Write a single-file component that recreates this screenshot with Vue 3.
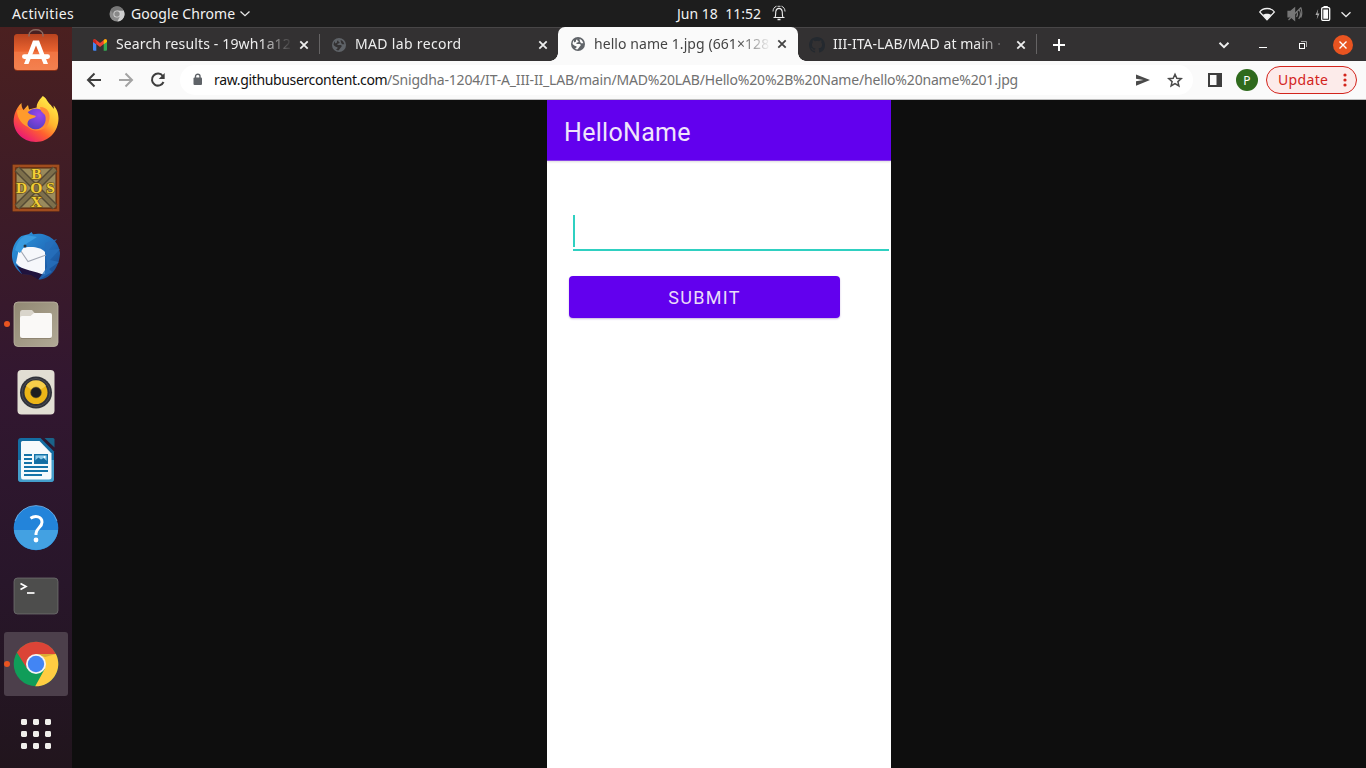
<script setup>
const tabs = [
  { icon: 'gmail', title: 'Search results - 19wh1a12', cls: 'first', fit: 't1' },
  { icon: 'globe', title: 'MAD lab record', cls: 'second', fit: 't2' },
  { icon: 'globe', title: 'hello name 1.jpg (661×128', cls: 'active', fit: 't3' },
  { icon: 'github', title: 'III-ITA-LAB/MAD at main ·', cls: 'last', fit: 't4' },
]
const dots = [0, 12, 24]
</script>

<template>
  <div class="desktop">
    <header class="topbar">
      <span class="activities">Activities</span>
      <svg class="app-ico" width="16" height="16" viewBox="0 0 16 16">
        <circle cx="8" cy="8" r="7.5" fill="#8b8b8b" />
        <path d="M8 4.5h6.7A7.5 7.5 0 0 1 8.4 15.5L11.2 10z" fill="#cfcfcf" />
        <path d="M1.5 4A7.5 7.5 0 0 1 14.7 4.5H8L4.8 9z" fill="#777" />
        <circle cx="8" cy="8" r="3.6" fill="#d8d8d8" />
        <circle cx="8" cy="8" r="2.7" fill="#898989" />
      </svg>
      <span class="app-name">Google Chrome</span>
      <svg class="app-chev" width="12" height="8" viewBox="0 0 12 8"><path d="M1.5 1.5L6 5.7L10.5 1.5" fill="none" stroke="#e8e8e8" stroke-width="1.3" /></svg>
      <span class="clock">Jun 18&nbsp; 11:52</span>
      <svg class="bell" width="14" height="16" viewBox="0 0 14 16" fill="none" stroke="#eee" stroke-width="1.1">
        <path d="M1.500 12.500h11M3 12.500C4 10 3.500 8.500 3.800 6.500C4.300 2.300 9.700 2.300 10.200 6.500C10.500 8.500 10 10 11 12.500" />
        <path d="M1 6.500C1 4 2.300 2 4.500 1.200M13 6.500C13 4 11.700 2 9.500 1.200M5.500 1.300h3" stroke-width=".9" />
        <path d="M5.500 14.500h3" stroke-width="1.500" />
      </svg>
      <svg class="status" width="106" height="20" viewBox="1256 3 106 20">
        <path d="M1259.7 11C1262.8 6.3 1271.4 6.3 1274.4 11L1267 18.8z" fill="none" stroke="#f0f0f0" stroke-width="1.3" />
        <path d="M1262.8 13.8C1265 12.3 1269 12.3 1271.2 13.8L1267 18.8z" fill="#f0f0f0" />
        <g fill="none" stroke="#777" stroke-width="1.2"><path d="M1288 10.3h2.8l3.8-3.2v12l-3.8-3.3H1288z" fill="#777" /><path d="M1296.5 10q2 3 0 6M1298.7 8q3.5 5 0 10M1300.8 6.5q2 6 0 10M1288.5 19L1301 6.5" /></g>
        <path d="M1318.2 8l-2.7 6h2l-.8 4.5 2.8-6h-2z" fill="#aaa" />
        <rect x="1321.7" y="6.7" width="8" height="12.6" rx="1" fill="none" stroke="#fff" stroke-width="1.3" />
        <path d="M1323.3 8.5h4.8v9.2h-4.8zM1323.5 5h4.3v1.5h-4.3z" fill="#fff" />
        <path d="M1341.5 11.3L1346 15.5L1350.5 11.3" fill="none" stroke="#e8e8e8" stroke-width="1.3" />
      </svg>
    </header>

    <div class="main">
      <aside class="dock">
        <div class="item">
          <svg viewBox="4 20 64 64">
            <defs>
              <linearGradient id="bag" x1="0" y1="0" x2="0" y2="1"><stop offset="0" stop-color="#b8431f" /><stop offset=".48" stop-color="#ea6330" /><stop offset=".5" stop-color="#f27542" /><stop offset="1" stop-color="#f38150" /></linearGradient>
            </defs>
            <rect x="14" y="34" width="44" height="37" rx="3.5" fill="#8c3218" />
            <rect x="14" y="34" width="44" height="36" rx="3.5" fill="url(#bag)" />
            <path d="M29 36.500v-1.500C29 28 43 28 43 35v1.500" fill="none" stroke="#8a6a60" stroke-width="1.500" />
            <path d="M24 64L33 40.500h6L48 64H43.500L36 45.500 28.500 64z" fill="#fff" />
            <rect x="22" y="54.3" width="28" height="4.6" rx="2.3" fill="#fff" />
          </svg>
        </div>
        <div class="item">
          <svg viewBox="4 88 64 64">
            <defs>
              <linearGradient id="fx" x1=".9" y1=".1" x2=".25" y2="1"><stop offset="0" stop-color="#fff14a" /><stop offset=".4" stop-color="#ffb52e" /><stop offset=".65" stop-color="#ff602f" /><stop offset="1" stop-color="#e8127c" /></linearGradient>
              <radialGradient id="fp" cx=".65" cy=".3" r=".7"><stop offset="0" stop-color="#9a47ee" /><stop offset="1" stop-color="#5a3fc4" /></radialGradient>
            </defs>
            <path d="M21.5 103C19 105 15.6 110 14.2 116C11 130 22 142 36 142C49 142 58.5 131 58.5 118.5C58.5 112 55.8 107.5 53.5 105.5L54 109C51.5 105.5 47.5 102 46.5 99.5C45.5 97.500 43.5 96.5 42.8 96C40 99 36.5 103 36.7 107.5L29 109.5L28 105L23.5 110C22 108 21.3 105.5 21.5 103z" fill="url(#fx)" />
            <circle cx="36" cy="119" r="10.500" fill="url(#fp)" />
            <path d="M17 110.5C23 109 27 111.5 30 114.3L36 116C35 118.5 31 118 29 120C27.5 121.5 27 124 28 127C23 125 17 119 17 110.5z" fill="#ff9b2c" />
            <path d="M40 107C48 107 51 114 49 121C48 127 42 131 36 130.5C30 130 27 127 26 123C28 127 32 129.500 36 129.500C43 129 47.500 122 45 115L41 111z" fill="#ff8a35" />
          </svg>
        </div>
        <div class="item">
          <svg viewBox="4 156 64 64">
            <rect x="12.5" y="164.5" width="47" height="47" fill="#57270f" />
            <rect x="14" y="166" width="44" height="44" fill="none" stroke="#a14d1e" stroke-width="2.6" />
            <rect x="16.5" y="168.500" width="39" height="39" fill="#9a8a5c" />
            <path d="M17 169L55 207M55 169L17 207" stroke="#554a35" stroke-width="7" />
            <path d="M17 169L55 207M55 169L17 207" stroke="#7d6f4b" stroke-width="4" />
            <g class="dos" fill="#f2cf36" stroke="#6b5216" stroke-width="1.400" paint-order="stroke" text-anchor="middle">
              <text x="36.3" y="178.500">B</text><text x="21.7" y="192.500">D</text><text x="36.3" y="192.500">O</text><text x="50.5" y="192.500">S</text><text x="36.300" y="206.500">X</text>
            </g>
          </svg>
        </div>
        <div class="item">
          <svg viewBox="4 224 64 64">
            <defs><linearGradient id="tb" x1="0" y1="0" x2="1" y2="1"><stop offset="0" stop-color="#2d9be0" /><stop offset=".5" stop-color="#2372bf" /><stop offset="1" stop-color="#174489" /></linearGradient></defs>
            <path d="M21.500 236L29 234L31.500 232L33 234.300C46 231.500 59 240 60 253C59.500 269 48 280 38.500 279.500L41 277L35 278L38 274.500L22 274C14 268 10.500 259 12.500 250.500C13.500 245 17 239 21.500 236z" fill="url(#tb)" />
            <path d="M19 248.500C29 246 40 246 45 252V274C35 275.500 24 272 16 263z" fill="#f6f7fb" />
            <path d="M19.500 249L28 261.500L46 255" fill="none" stroke="#a3a8b4" stroke-width="1.1" />
            <path d="M16 265C23 270 36 271 44 275L38 279.500L31 275L22 274z" fill="#20133d" />
            <path d="M26 235L37 237L26 244L20 253L15 250C17 243 20 238 26 235z" fill="#3a9ce0" />
            <circle cx="25" cy="246" r="1.500" fill="#28333f" />
            <path d="M45 243L57 239L49 250L60 249L50 260L59 262L49 269L52 272L38.500 279.500L47 267z" fill="#276fbc" opacity=".8" />
          </svg>
        </div>
        <div class="item running">
          <svg viewBox="4 292 64 64">
            <defs><linearGradient id="fl" x1="0" y1="0" x2="1" y2="1"><stop offset="0" stop-color="#918873" /><stop offset="1" stop-color="#b1a995" /></linearGradient></defs>
            <rect x="14" y="302" width="44" height="44.500" rx="4" fill="url(#fl)" stroke="#beb6a3" stroke-width=".8" />
            <path d="M20 312.500q0-2.500 2-2.500h10l3.500 4v6H20z" fill="#d9d5cb" />
            <path d="M20 318q0-2 2-2h8.500l3.500-3h16q2 0 2 2v20.500q0 2.500-2.500 2.500h-27q-2.500 0-2.500-2.500z" fill="#faf9f7" />
            <path d="M21 338.500h30" stroke="#857b68" stroke-width=".7" />
          </svg>
        </div>
        <div class="item">
          <svg viewBox="4 360 64 64">
            <rect x="17.500" y="370" width="37" height="44.500" rx="4" fill="#e1ded3" />
            <circle cx="36" cy="392.500" r="16" fill="#303239" />
            <circle cx="36" cy="392.500" r="14" fill="none" stroke="#4a4b52" stroke-width="1" />
            <circle cx="36" cy="392.500" r="11.500" fill="#ecb517" />
            <path d="M26 386A11.500 11.500 0 0 1 46 386L36 392.500z" fill="#f6ce49" />
            <circle cx="36" cy="392.500" r="5.400" fill="#1c1d20" stroke="#716328" stroke-width=".6" />
          </svg>
        </div>
        <div class="item">
          <svg viewBox="4 428 64 64">
            <path d="M21 438H40.500L54 451.500V479q0 3-3 3H21q-3 0-3-3v-38q0-3 3-3z" fill="#146da2" />
            <path d="M18 460h36v19q0 3-3 3H21q-3 0-3-3z" fill="#449ecb" />
            <path d="M22.500 441h17L51.500 453.500V477q0 2.500-2.500 2.500H23q-2 0-2-2.500v-34.500q0-1.500 1.500-1.500z" fill="#f6fafc" />
            <path d="M44.500 438h8.500q1.500 0 1.500 1.500V447.500z" fill="#1a6389" />
            <g stroke="#1473a8" stroke-width="1.900"><path d="M24 455h8M24 459h8M24 463h8M24 467h24M24 471h24M24 475h18" /></g>
            <rect x="34.700" y="454.700" width="12.600" height="8.600" fill="#8dcbea" stroke="#1473a8" stroke-width="1.400" />
            <path d="M35 463v-2.500l3.500-3 2.500 2 2.500-1.500 3.500 3v2z" fill="#146da2" /><circle cx="44.500" cy="457" r="1" fill="#fff" />
          </svg>
        </div>
        <div class="item">
          <svg viewBox="4 496 64 64">
            <circle cx="36" cy="528" r="22.300" fill="#2384da" />
            <path d="M13.900 530A22.200 22.200 0 0 0 58.100 530z" fill="#43a1e2" />
            <path d="M15 521A22 22 0 0 1 57 521" fill="none" stroke="#76b9ef" stroke-width=".8" />
            <path d="M30.500 518.300C35.500 515 42 516.500 42 522.200C42 527.500 36 528 36 533.500V535" fill="none" stroke="#fff" stroke-width="3" />
            <circle cx="36" cy="540" r="2.400" fill="#fff" />
          </svg>
        </div>
        <div class="item">
          <svg viewBox="4 564 64 64">
            <rect x="14" y="578" width="44" height="36" rx="3.500" fill="#4d4d4c" stroke="#777" stroke-width=".7" />
            <path d="M20.500 583.500l5.500 3-5.500 3" fill="none" stroke="#fff" stroke-width="1.700" />
            <path d="M27 593h7.500" stroke="#fff" stroke-width="1.700" />
          </svg>
        </div>
        <div class="item running focused">
          <svg viewBox="4 632 64 64">
            <circle cx="36" cy="664" r="22.300" fill="#109d59" />
            <path d="M36 654H55.900A22.300 22.300 0 0 1 35.200 686.300L44.700 669z" fill="#ffcd42" />
            <path d="M16.900 652.500A22.300 22.300 0 0 1 55.900 654H36L27.300 669z" fill="#db4437" />
            <path d="M36 654H55.900L45 657z" fill="#b88b28" opacity=".5" />
            <circle cx="36" cy="664" r="10" fill="#f4f4f4" />
            <circle cx="36" cy="664" r="8.200" fill="#4285f4" />
          </svg>
        </div>
        <svg class="grid" width="30" height="30" viewBox="0 0 30 30">
          <template v-for="y in dots" :key="y"><rect v-for="x in dots" :key="x" :x="x" :y="y" width="6" height="6" rx="1.400" fill="#f0efeb" /></template>
        </svg>
      </aside>

      <section class="browser">
        <div class="tabs">
          <div v-for="(t, i) in tabs" :key="i" class="tab" :class="t.cls">
            <svg v-if="t.icon === 'gmail'" class="fav" viewBox="0 0 16 16">
              <path d="M1 4.500L4.300 7v6.700H2q-1 0-1-1z" fill="#4285f4" /><path d="M15 4.500L11.700 7v6.700H14q1 0 1-1z" fill="#34a853" />
              <path d="M1 4.500V4C1 2.200 2.700 2 3.800 2.800L8 6l4.200-3.200C13.300 2 15 2.200 15 4v.5L8 10z" fill="#ea4335" />
              <path d="M11.700 3.200l.5-.4C13.300 2 15 2.200 15 4v1L11.700 7.300z" fill="#fbbc04" /><path d="M1 5V4c0-1 .6-1.500 1.500-1.500L4.300 4v3.300z" fill="#c5221f" />
            </svg>
            <svg v-else-if="t.icon === 'globe'" class="fav globe" viewBox="0 0 16 16">
              <circle cx="8" cy="8" r="7" />
              <path class="land" d="M8.500 2.600C6.500 3 7 4.700 8.300 5C9 5.300 8.500 6.500 7.300 6.500C6 6.500 6 8 7 8h2.600C11 8 11 9.800 10 10.300C9 11 9 12.300 7.300 13.400C6.500 13.500 5.500 13.100 5 12.600L6.500 11.500V10.300C5 10.300 3.500 8.800 2.600 8C2.500 7 3 5.300 4 4.300L4 6.500L6 5.500V4L8.500 2.600zM9.500 3C11.500 3.400 13 5.400 13.400 7.300L11 7.200L10 5.500z" />
            </svg>
            <svg v-else class="fav" viewBox="0 0 16 16"><path fill="#24292f" d="M8 0C3.580 0 0 3.580 0 8c0 3.540 2.290 6.530 5.470 7.590.4.070.550-.170.550-.380v-1.490c-2.010.370-2.530-.490-2.690-.940-.090-.230-.480-.940-.820-1.130-.280-.150-.680-.520-.010-.530.630-.010 1.080.580 1.230.820.720 1.210 1.870.870 2.330.660.070-.520.280-.870.510-1.070-1.780-.2-3.640-.890-3.640-3.950 0-.870.310-1.590.820-2.150-.080-.2-.360-1.020.080-2.120 0 0 .670-.210 2.200.820a7.600 7.600 0 0 1 4 0c1.530-1.040 2.200-.820 2.200-.820.440 1.100.160 1.920.080 2.120.510.560.820 1.270.820 2.150 0 3.070-1.870 3.750-3.650 3.950.290.250.540.730.540 1.480v2.190c0 .210.150.460.550.380A8 8 0 0 0 16 8c0-4.420-3.580-8-8-8z" /></svg>
            <span class="title"><span :class="t.fit">{{ t.title }}</span></span>
            <svg class="close" width="10" height="10" viewBox="0 0 10 10"><path d="M1.300 1.300l7.400 7.400M8.700 1.300L1.300 8.700" fill="none" stroke="currentColor" stroke-width="1.800" /></svg>
          </div>
          <svg class="plus" width="12" height="12" viewBox="0 0 12 12"><path d="M6 0v12M0 6h12" stroke="#fff" stroke-width="2" /></svg>
          <svg class="winctl" width="142" height="30" viewBox="1214 29 142 30">
            <path d="M1219.500 41.800l4.500 4.300 4.500-4.300" fill="none" stroke="#eee" stroke-width="2" />
            <path d="M1259 46.500h8" stroke="#fff" stroke-width="1" />
            <rect x="1299.500" y="42.500" width="5" height="5" fill="none" stroke="#fff" /><path d="M1301 40.500h5.500V46" fill="none" stroke="#aaa" />
            <circle cx="1343" cy="44" r="10" fill="#e95420" /><path d="M1339.500 40.500l7 7M1346.500 40.500l-7 7" stroke="#fff" stroke-width="1.400" />
          </svg>
        </div>

        <div class="toolbar">
          <svg class="nav" width="90" height="30" viewBox="84 65 90 30" fill="none" stroke="#3d3d3d" stroke-width="2">
            <path d="M101 80H88.500M94.500 73.500L88 80l6.500 6.500" />
            <path d="M119 80h12.500M125.500 73.500L132 80l-6.500 6.500" stroke="#a3a3a3" />
            <path d="M162.800 76A6 6 0 1 0 163.500 82" /><path d="M164.700 73v6h-6z" fill="#3d3d3d" stroke="none" />
          </svg>
          <div class="omnibox">
            <svg class="lock" width="10" height="13" viewBox="0 0 10 13"><rect x="0.500" y="4.500" width="8.500" height="7.500" rx="1" fill="#5f6368" /><path d="M2.500 5V3.300C2.500.5 7 .5 7 3.300V5" fill="none" stroke="#5f6368" stroke-width="1.400" /></svg>
            <span class="host">raw.githubusercontent.com</span><span class="path">/Snigdha-1204/IT-A_III-II_LAB/main/MAD%20LAB/Hello%20%2B%20Name/hello%20name%201.jpg</span>
            <svg class="omni-actions" width="50" height="20" viewBox="1134 70 50 20">
              <path d="M1136 74.500L1150 80L1136 85.700V81.200L1143.500 80L1136 78.800z" fill="#4a4a4a" />
              <path d="M1175 74.300l1.800 4 4.400.4-3.300 2.900 1 4.300-3.900-2.300-3.900 2.300 1-4.300-3.300-2.900 4.400-.4z" fill="none" stroke="#4a4a4a" stroke-width="1.500" />
            </svg>
          </div>
          <svg class="panel" width="14" height="14" viewBox="0 0 14 14"><path d="M0 0h14v14H0zM2 2v10h6.500V2z" fill="#3d3d3d" fill-rule="evenodd" /></svg>
          <span class="avatar">P</span>
          <span class="update"><span>Update</span><svg width="4" height="14" viewBox="0 0 4 14" fill="#d3241c"><circle cx="2" cy="2" r="1.600" /><circle cx="2" cy="7" r="1.600" /><circle cx="2" cy="12" r="1.600" /></svg></span>
        </div>

        <div class="viewport">
          <div class="phone">
            <div class="appbar"><span>HelloName</span></div>
            <div class="field"><i class="caret"></i></div>
            <div class="submit"><span>SUBMIT</span></div>
          </div>
        </div>
      </section>
    </div>
  </div>
</template>

<style>
html, body { margin: 0; background: #0e0e0e; overflow: hidden; }
</style>

<style scoped>
* { box-sizing: border-box; }
svg { display: block; flex: none; }
.desktop { width: 1366px; height: 768px; overflow: hidden; display: flex; flex-direction: column; font-family: "Noto Sans", "Open Sans", sans-serif; font-size: 14px; white-space: nowrap; }
.topbar { height: 27px; flex: none; background: #1d1d1d; color: #f2f2f2; display: flex; align-items: center; padding-left: 12px; }
.activities { width: 97px; letter-spacing: .38px; }
.app-ico { margin-right: 6px; }
.app-name { width: 108px; letter-spacing: .06px; }
.app-chev { margin-top: 1px; }
.clock { margin-left: 426px; width: 96px; letter-spacing: .02px; }
.activities, .app-name, .clock { padding-bottom: 1px; }
.bell { margin-top: -2px; margin-left: -1px; }
.status { margin-left: auto; margin-right: 4px; }
.main { flex: 1; min-height: 0; display: flex; }
.dock { width: 72px; flex: none; display: flex; flex-direction: column; align-items: center; gap: 4px; overflow: hidden; background: linear-gradient(#4b2020 0%, #3e1c26 22%, #321730 48%, #28162a 75%, #21151d 100%); }
.item { width: 64px; height: 64px; flex: none; border-radius: 3px; display: flex; position: relative; }
.item:first-child { margin-top: -7px; }
.item svg { width: 64px; height: 64px; }
.focused { background: #4c3f4b; }
.running::before { content: ""; position: absolute; left: 0; top: 29px; width: 6px; height: 6px; border-radius: 50%; background: #e95420; }
.dos { font: bold 15.500px "Liberation Serif", serif; }
.grid { margin-top: 19px; }
.browser { flex: 1; min-width: 0; display: flex; flex-direction: column; }
.tabs { height: 34px; flex: none; background: #333132; border-top: 1px solid #484647; display: flex; align-items: center; padding-left: 9px; }
.tab { width: 239px; height: 33px; flex: none; display: flex; align-items: center; padding-left: 10px; color: #eee; position: relative; }
.first::after, .last::after { content: ""; position: absolute; right: 0; top: 6px; width: 1px; height: 20px; background: #656364; }
.second .fav, .first .fav { margin-left: 1px; }
.second { width: 238px; }
.active { width: 240px; height: 34px; margin-top: -1px; padding-left: 12px; background: #fafafa; color: #444; border-radius: 7px 7px 0 0; }
.active::before, .active::after { content: ""; position: absolute; bottom: 0; width: 8px; height: 8px; }
.active::before { left: -8px; background: radial-gradient(circle at 0 0, transparent 7.500px, #fafafa 8px); }
.active::after { right: -8px; background: radial-gradient(circle at 100% 0, transparent 7.500px, #fafafa 8px); }
.last { padding-left: 11px; }
.fav { width: 16px; height: 16px; margin-right: 8px; }
.globe { fill: #5f6368; }
.globe .land { fill: #333132; }
.active .land { fill: #fafafa; }
.title { width: 175px; margin-right: 8px; padding-bottom: 2px; overflow: hidden; -webkit-mask-image: linear-gradient(90deg, #000 82%, transparent 101%); mask-image: linear-gradient(90deg, #000 82%, transparent 101%); }
.t1 { letter-spacing: .14px; }
.t2 { letter-spacing: .33px; }
.t3 { letter-spacing: .07px; }
.t4 { letter-spacing: .04px; }
.plus { margin-left: 16px; }
.winctl { margin-left: auto; margin-right: 10px; }
.toolbar { height: 39px; flex: none; background: #fafafa; border-bottom: 1px solid #bdbdbd; display: flex; align-items: center; padding-left: 12px; }
.nav { margin-right: 6px; }
.omnibox { width: 1013px; height: 30px; border-radius: 15px; background: #fff; display: flex; align-items: center; padding-left: 13px; }
.lock { margin-right: 11px; margin-top: -1px; }
.host, .path { padding-bottom: 2px; }
.host { color: #111; width: 173px; letter-spacing: -.35px; }
.path { color: #717171; width: 631px; letter-spacing: -.18px; }
.omni-actions { margin-left: 116px; }
.panel { margin-left: 15px; }
.avatar { width: 22px; height: 22px; border-radius: 50%; background: #2f6a1d; color: #fff; font-size: 12px; display: flex; align-items: center; justify-content: center; margin-left: 14px; }
.update { width: 91px; height: 28px; border: 1px solid #d3241c; border-radius: 14px; background: #fcebea; color: #d3241c; margin-left: 8px; display: flex; align-items: center; padding-left: 11px; }
.update > span { width: 65px; letter-spacing: .35px; padding-bottom: 1px; }
.viewport { flex: 1; background: #0e0e0e; display: flex; padding-left: 475px; }
.phone { width: 344px; background: #fff; font-family: Roboto, sans-serif; overflow: hidden; }
.appbar { height: 61px; background: #6200ee; border-bottom: 1px solid #8a44e8; box-shadow: 0 1px 2px #ddd; color: #f0e4fb; font-size: 25px; display: flex; align-items: center; padding: 4px 0 0 17px; letter-spacing: .3px; }
.field { width: 316px; height: 36px; margin: 54px 0 0 26px; border-bottom: 2px solid #2fd0c1; }
.caret { display: block; width: 2px; height: 32px; background: #2fd0c1; }
.submit { width: 271px; height: 42px; margin: 25px 0 0 22px; border-radius: 4px; background: #6200ee; box-shadow: 0 1px 2px #c9b5dd; color: #eadcf8; font-size: 18px; letter-spacing: 1.300px; display: flex; align-items: center; justify-content: center; }
</style>
